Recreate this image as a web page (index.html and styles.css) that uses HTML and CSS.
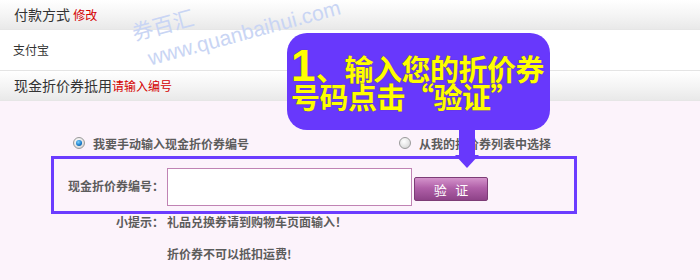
FILE: index.html
```html
<!DOCTYPE html>
<html lang="zh-CN">
<head>
<meta charset="utf-8">
<title>现金折价券抵用</title>
<link rel="stylesheet" href="styles.css">
</head>
<body>
<div class="page">
  <div class="bar">付款方式 <span class="red small">修改</span></div>
  <div class="row">支付宝</div>
  <div class="bar">现金折价券抵用<span class="red small">请输入编号</span></div>

  <div class="coupon">
    <div class="choices">
      <label class="choice"><span class="radio on"></span>我要手动输入现金折价券编号</label>
      <label class="choice second"><span class="radio"></span>从我的折价券列表中选择</label>
    </div>
    <div class="entry">
      <span class="entry-label">现金折价券编号：</span>
      <input class="code-input" type="text">
      <button class="check-btn">验&nbsp;&nbsp;&nbsp;证</button>
    </div>
    <div class="tips">
      <span class="tips-label">小提示：</span>
      <span>礼品兑换券请到购物车页面输入！</span>
      <span></span>
      <span class="tips-second">折价券不可以抵扣运费!</span>
    </div>
  </div>

  <div class="mark mark-cn">券百汇</div>
  <div class="mark mark-url">www.quanbaihui.com</div>

  <div class="callout">
    <div class="callout-line"><span class="big-one">1</span>、输入您的折价券</div>
    <div class="callout-line">号码点击“验证”</div>
  </div>
  <div class="arrow-shaft"></div>
  <div class="arrow-head"></div>
</div>
</body>
</html>
```

FILE: styles.css
```css
body {
  margin: 0;
  font-family: "Noto Sans CJK SC", "Liberation Sans", sans-serif;
  color: #333;
}

.page {
  position: relative;
  width: 700px;
  height: 280px;
  overflow: hidden;
  background: #fcf3fb;
}

.bar {
  height: 29px;
  line-height: 29px;
  padding-left: 14px;
  font-size: 14px;
  background: linear-gradient(to bottom, #ffffff 0%, #f4f4f4 55%, #e9e9e9 100%);
  border-bottom: 1px solid #e6e6e6;
}

.row {
  height: 40px;
  line-height: 40px;
  padding-left: 13px;
  font-size: 12px;
  background: #fff;
  border-bottom: 1px solid #e4e4e4;
}

.red { color: #d40000; }
.small { font-size: 12px; }

.coupon {
  padding-top: 34px;
  font-size: 12px;
  font-weight: bold;
  color: #5c5c5c;
}

.choices {
  display: flex;
  align-items: center;
  height: 16px;
  padding-left: 73px;
}

.choice {
  display: flex;
  align-items: center;
  gap: 8px;
}

.choice.second { margin-left: 150px; }

.radio {
  width: 10px;
  height: 10px;
  border-radius: 50%;
  border: 1px solid #9a9a9a;
  background: radial-gradient(circle at 40% 35%, #ffffff 0%, #e2e2e2 60%, #c4c4c4 100%);
  position: relative;
}

.radio.on::after {
  content: "";
  position: absolute;
  left: 2px;
  top: 2px;
  width: 6px;
  height: 6px;
  border-radius: 50%;
  background: radial-gradient(circle at 40% 35%, #7fd3ff 0%, #1478c8 60%, #0a3f7a 100%);
}

.entry {
  display: flex;
  align-items: center;
  width: 506px;
  height: 52px;
  margin: 5px 0 0 51px;
  padding-left: 14px;
  border: 3px solid #6b3cff;
  box-sizing: content-box;
}

.entry-label { width: 99px; }

.code-input {
  width: 243px;
  height: 36px;
  margin: 4px 0 0;
  padding: 0;
  border: 1px solid #c083b4;
  background: #fff;
}

.check-btn {
  width: 74px;
  height: 24px;
  margin: 8px 0 0 2px;
  padding: 0;
  border: 1px solid #7d3c76;
  border-radius: 2px;
  background: linear-gradient(to bottom, #d493cb 0%, #b060a8 45%, #8e4388 100%);
  color: #fff;
  font-family: "Noto Sans CJK SC", sans-serif;
  font-size: 13px;
}

.tips {
  display: grid;
  grid-template-columns: 51px auto;
  row-gap: 16px;
  padding: 0 0 0 116px;
  line-height: 16px;
}

.mark {
  position: absolute;
  color: #c9d5f4;
  font-size: 21px;
  transform: rotate(-15deg);
  transform-origin: center;
  white-space: nowrap;
}

.mark-cn {
  left: 131px;
  top: 9px;
}

.mark-url {
  left: 145px;
  top: 21px;
  font-family: "Liberation Sans", sans-serif;
}

.callout {
  position: absolute;
  left: 287px;
  top: 33px;
  width: 263px;
  height: 97px;
  padding: 17px 0 0 4px;
  box-sizing: border-box;
  border-radius: 20px;
  background: #6838fc;
  color: #ffff00;
  font-weight: bold;
  font-size: 29px;
  text-shadow: 0 0 1px #5a4a30;
}

.callout-line {
  height: 31px;
  line-height: 31px;
  white-space: nowrap;
  letter-spacing: -0.5px;
}

.big-one {
  font-family: "Liberation Sans", sans-serif;
  font-size: 44px;
  margin-right: 1px;
}

.arrow-shaft {
  position: absolute;
  left: 459px;
  top: 128px;
  width: 16px;
  height: 28px;
  background: #6838fc;
}

.arrow-head {
  position: absolute;
  left: 455px;
  top: 155px;
  width: 0;
  height: 0;
  border-left: 12px solid transparent;
  border-right: 12px solid transparent;
  border-top: 13px solid #6838fc;
}
```
